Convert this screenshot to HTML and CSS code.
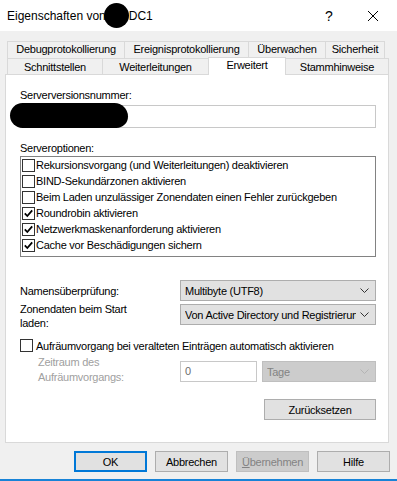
FILE: index.html
```html
<!DOCTYPE html>
<html lang="de">
<head>
    <meta charset="UTF-8">
    <title>Eigenschaften von DC1</title>
    <link rel="stylesheet" href="styles.css">
</head>
<body>
    <div class="titlebar">
        <span class="title">Eigenschaften von<span class="blot-title"></span>DC1</span>
        <span class="help">?</span>
        <span class="close">
            <svg width="10" height="10" viewBox="0 0 10 10"><path d="M0 0L10 10M10 0L0 10" stroke="#000" stroke-width="1" fill="none"/></svg>
        </span>
    </div>

    <div class="tabs">
        <div class="tab-row">
            <div class="tab tab-debug">Debugprotokollierung</div>
            <div class="tab tab-event">Ereignisprotokollierung</div>
            <div class="tab tab-watch">Überwachen</div>
            <div class="tab tab-security">Sicherheit</div>
        </div>
        <div class="tab-row row-front">
            <div class="tab tab-if">Schnittstellen</div>
            <div class="tab tab-fwd">Weiterleitungen</div>
            <div class="tab tab-adv selected">Erweitert</div>
            <div class="tab tab-root">Stammhinweise</div>
        </div>
    </div>

    <div class="panel">
        <div class="label label-version">Serverversionsnummer:</div>
        <div class="version-wrap">
            <div class="textbox"></div>
            <!-- geschwärzt -->
            <div class="blot-version"></div>
        </div>

        <div class="label label-options">Serveroptionen:</div>
        <div class="listbox">
            <div class="opt"><span class="check"></span>Rekursionsvorgang (und Weiterleitungen) deaktivieren</div>
            <div class="opt"><span class="check"></span>BIND-Sekundärzonen aktivieren</div>
            <div class="opt"><span class="check"></span>Beim Laden unzulässiger Zonendaten einen Fehler zurückgeben</div>
            <div class="opt"><span class="check on"><svg width="11" height="11" viewBox="0 0 11 11"><path d="M1.8 5.4L4.3 8L9.2 2.4" stroke="#000" stroke-width="1.8" fill="none"/></svg></span>Roundrobin aktivieren</div>
            <div class="opt"><span class="check on"><svg width="11" height="11" viewBox="0 0 11 11"><path d="M1.8 5.4L4.3 8L9.2 2.4" stroke="#000" stroke-width="1.8" fill="none"/></svg></span>Netzwerkmaskenanforderung aktivieren</div>
            <div class="opt"><span class="check on"><svg width="11" height="11" viewBox="0 0 11 11"><path d="M1.8 5.4L4.3 8L9.2 2.4" stroke="#000" stroke-width="1.8" fill="none"/></svg></span>Cache vor Beschädigungen sichern</div>
        </div>

        <div class="field-row row-names">
            <div class="field-label">Namensüberprüfung:</div>
            <div class="select">
                <span class="select-text">Multibyte (UTF8)</span>
                <svg class="chev" width="9" height="5" viewBox="0 0 9 5"><path d="M0.5 0.5L4.5 4.5L8.5 0.5" stroke="#333" fill="none"/></svg>
            </div>
        </div>
        <div class="field-row row-zones">
            <div class="field-label two-line">Zonendaten beim Start<br>laden:</div>
            <div class="select">
                <span class="select-text">Von Active Directory und Registrierung</span>
                <svg class="chev" width="9" height="5" viewBox="0 0 9 5"><path d="M0.5 0.5L4.5 4.5L8.5 0.5" stroke="#333" fill="none"/></svg>
            </div>
        </div>

        <div class="cb-row"><span class="check"></span>Aufräumvorgang bei veralteten Einträgen automatisch aktivieren</div>

        <div class="field-row row-scavenge">
            <div class="field-label two-line disabled">Zeitraum des<br>Aufräumvorgangs:</div>
            <div class="num-input">0</div>
            <div class="select select-disabled">
                <span class="select-text">Tage</span>
                <svg class="chev" width="9" height="5" viewBox="0 0 9 5"><path d="M0.5 0.5L4.5 4.5L8.5 0.5" stroke="#b4b4b4" fill="none"/></svg>
            </div>
        </div>

        <div class="reset-row">
            <button type="button" class="btn btn-reset">Zurücksetzen</button>
        </div>
    </div>

    <div class="buttons">
        <button type="button" class="btn btn-default">OK</button>
        <button type="button" class="btn">Abbrechen</button>
        <button type="button" class="btn btn-disabled"><u>Ü</u>bernehmen</button>
        <button type="button" class="btn">Hilfe</button>
    </div>
    <div class="accent"></div>
</body>
</html>
```

FILE: styles.css
```css
/* Fenster */
body {
    margin: 0;
    width: 397px;
    height: 481px;
    overflow: hidden;
    background-color: #f0f0f0;
    font-family: "Liberation Sans", Arial, sans-serif;
    font-size: 11px;
    letter-spacing: -0.25px;
    color: #000;
}

.titlebar {
    display: flex;
    align-items: center;
    height: 31px;
    padding: 0 19px 0 7px;
    background-color: #fff;
    letter-spacing: 0;
}

.title {
    font-size: 12px;
    display: flex;
    align-items: center;
}

.blot-title {
    display: inline-block;
    width: 25px;
    height: 25px;
    margin: 0 0 0 -2px;
    border-radius: 50%;
    background-color: #000;
}

.help {
    margin-left: auto;
    width: 14px;
    text-align: center;
    font-size: 14px;
}

.close {
    margin-left: 32px;
    display: flex;
}

/* Registerkarten */
.tabs {
    margin: 10px 0 0 7px;
}

.tab-row {
    display: flex;
    height: 17px;
}

.row-front {
    height: 16px;
}

.tab {
    box-sizing: border-box;
    height: 100%;
    margin-left: -1px;
    border: 1px solid #d9d9d9;
    border-bottom: none;
    background-color: #f0f0f0;
    text-align: center;
    line-height: 15px;
    white-space: nowrap;
}

.tab:first-child {
    margin-left: 0;
}

.tab-debug { width: 118px; }
.tab-event { width: 125px; }
.tab-watch { width: 78px; }
.tab-security { width: 60px; }
.tab-if { width: 96px; }
.tab-fwd { width: 107px; }
.tab-adv { width: 78px; }
.tab-root { width: 104px; }

.row-front .tab {
    line-height: 16px;
}

.tab.selected {
    position: relative;
    z-index: 2;
    height: 18px;
    margin-top: -1px;
    background-color: #fff;
    line-height: 15px;
}

/* Inhalt */
.panel {
    box-sizing: border-box;
    width: 384px;
    height: 369px;
    margin-left: 5px;
    padding: 0 12px 0 14px;
    border: 1px solid #d9d9d9;
    background-color: #fff;
}

.label {
    line-height: 13px;
}

.label-version {
    margin-top: 14px;
}

.version-wrap {
    position: relative;
    margin-top: 3px;
}

.textbox {
    box-sizing: border-box;
    height: 23px;
    border: 1px solid #c8c8c8;
}

.blot-version {
    position: absolute;
    left: -10px;
    top: -2px;
    width: 118px;
    height: 25px;
    border-radius: 13px 14px 12px 13px;
    background-color: #000;
}

.label-options {
    margin-top: 14px;
}

.listbox {
    box-sizing: border-box;
    height: 101px;
    margin-top: 1px;
    border: 1px solid #828282;
}

.opt {
    display: flex;
    align-items: center;
    height: 16px;
    white-space: nowrap;
}

.check {
    box-sizing: border-box;
    display: inline-flex;
    align-items: center;
    justify-content: center;
    flex-shrink: 0;
    width: 13px;
    height: 13px;
    margin: 0 1px 0 1px;
    border: 1px solid #333;
    background-color: #fff;
}

.field-row {
    display: flex;
    height: 21px;
}

.row-names {
    margin-top: 23px;
    align-items: center;
}

.row-zones {
    margin-top: 3px;
}

.field-label {
    width: 160px;
    flex-shrink: 0;
}

.two-line {
    margin-top: -2px;
    line-height: 14px;
}

.select {
    box-sizing: border-box;
    display: flex;
    align-items: center;
    flex: 1;
    min-width: 0;
    height: 21px;
    padding: 0 6px 0 4px;
    border: 1px solid #adadad;
    background-color: #e1e1e1;
}

.select-text {
    flex: 1;
    overflow: hidden;
    white-space: nowrap;
}

.chev {
    flex-shrink: 0;
    margin-left: 4px;
}

.cb-row {
    display: flex;
    align-items: center;
    height: 15px;
    margin-top: 13px;
    white-space: nowrap;
}

.cb-row .check {
    margin: 0 3px 0 0;
}

.row-scavenge {
    margin-top: 8px;
    gap: 5px;
}

.row-scavenge .field-label {
    width: 137px;
    padding-left: 18px;
    margin-top: -6px;
    line-height: 15px;
}

.disabled {
    color: #a0a0a0;
}

.num-input {
    box-sizing: border-box;
    width: 77px;
    height: 21px;
    padding-left: 4px;
    border: 1px solid #c8c8c8;
    line-height: 19px;
    color: #6d6d6d;
}

.select-disabled {
    flex: none;
    width: 114px;
    border-color: #bfbfbf;
    background-color: #cccccc;
    color: #838383;
}

.reset-row {
    display: flex;
    margin-top: 17px;
}

/* Schaltflächen */
.btn {
    box-sizing: border-box;
    width: 73px;
    height: 21px;
    padding: 0;
    border: 1px solid #adadad;
    background-color: #e1e1e1;
    font-family: inherit;
    font-size: 11px;
    letter-spacing: -0.25px;
    color: #000;
}

.btn-reset {
    width: 112px;
    margin-left: auto;
}

.btn-default {
    border: 2px solid #0078d7;
}

.btn-disabled {
    border-color: #bfbfbf;
    background-color: #cccccc;
    color: #838383;
}

.buttons {
    display: flex;
    justify-content: flex-end;
    gap: 8px;
    margin-top: 8px;
    padding-right: 7px;
}

.accent {
    height: 2px;
    margin-top: 7px;
    background-color: #1883d7;
}
```
